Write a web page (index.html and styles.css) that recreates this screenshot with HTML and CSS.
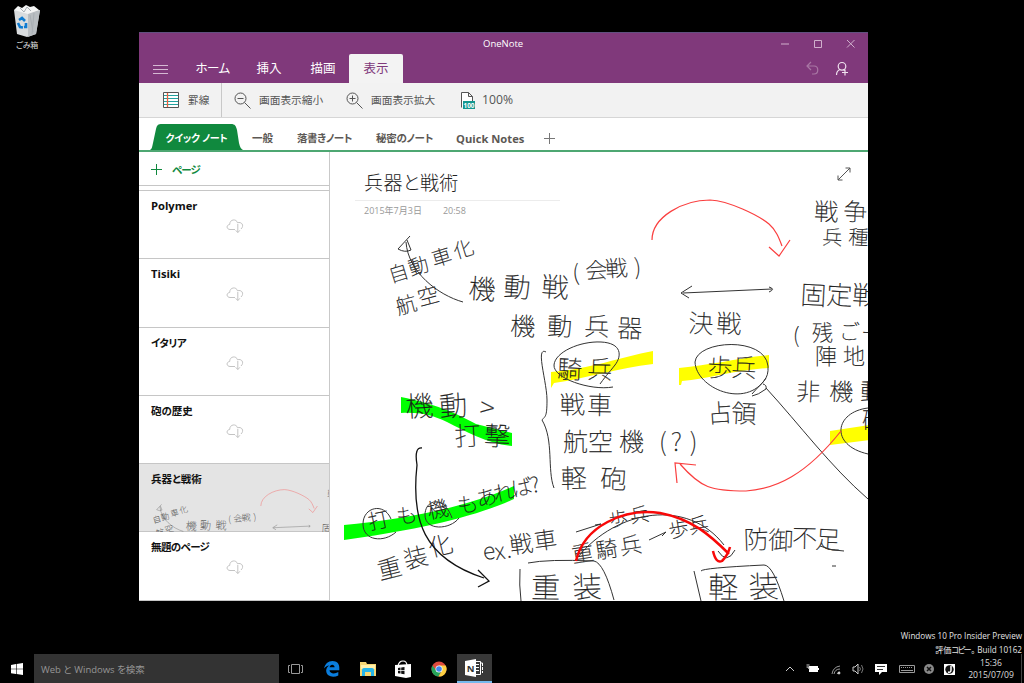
FILE: index.html
```html
<!DOCTYPE html>
<html lang="ja">
<head>
<meta charset="utf-8">
<title>OneNote</title>
<link rel="stylesheet" href="styles.css">
</head>
<body>
<svg class="defs" width="0" height="0">
  <symbol id="cloud" viewBox="0 0 18 15"><path d="M9 10.500H4C.2 10.300.2 5.800 3.700 5.500 3.600 0 10.500-.5 11.500 3.800 15.500 2.300 18.700 6.500 15 10M11.800 5v8.300M9.700 11.300l2.100 2.300 2.100-2.300"/></symbol>
</svg>
<main class="desktop">
  <div class="bin">
    <svg width="28" height="32" viewBox="0 0 28 32"><path fill="#d9dcde" d="M1 5 27 5 23 29 14 32 4 29Z"/><path fill="#b9bec2" d="m15 8 12-3-4 24-8 3Z"/><path fill="#f4f5f5" d="m1 5 4-4 4 2 4-3 4 2 4-1 5 4-11 4Z"/><path stroke="#a9afb4" fill="none" d="m7 3 4 4 3-5 4 4M17 10l3 17M21 8l-2 21"/><path fill="none" stroke="#0e7bd1" stroke-width="2.600" d="m6 15 3-2 3 3M5 18l2 4 3 .5M13 18v4h-2"/></svg>
    <span>ごみ箱</span>
  </div>

  <section class="window">
    <header class="top">
      <div class="titlebar"><span class="title">OneNote</span>
        <svg class="controls" width="84" height="12" viewBox="0 0 84 12"><path d="M3 6h8M36.500 2.500h7v7h-7zM69 2l7.500 7.500M76.500 2 69 9.500"/></svg>
      </div>
      <nav class="menu">
        <svg class="burger" width="15" height="10"><path d="M0 1.500h15M0 5.500h15M0 9.500h15"/></svg>
        <span class="m home">ホーム</span><span class="m">挿入</span><span class="m">描画</span><span class="m active">表示</span>
        <svg class="account" width="42" height="16" viewBox="0 0 42 16"><path class="dim" d="M5 1 1 5l4 4M1 5h7c5 0 5 8 0 8H6"/><circle cx="36" cy="5.300" r="3.800"/><path d="M30.500 14c0-3 1-4.500 3.500-5.500M39 8.500v6M36 11.500h6M37.500 8.500l1 1"/></svg>
      </nav>
    </header>
    <div class="ribbon">
      <div class="tool rule"><svg width="17" height="17"><path fill="#fff" stroke="#555" d="M.5.5h15v15H.5z"/><path stroke="#23a2a0" d="M1 3.500h14M1 6.500h14M1 9.500h14M1 12.500h14"/><path stroke="#e8603c" stroke-width="1.300" d="M4.500 1v14"/></svg><span>罫線</span></div>
      <div class="tool out"><svg class="mag" width="17" height="17"><circle cx="6.500" cy="6.500" r="5.500"/><path d="m10.500 10.500 6 6M3.500 6.500h6"/></svg><span>画面表示縮小</span></div>
      <div class="tool in"><svg class="mag" width="17" height="17"><circle cx="6.500" cy="6.500" r="5.500"/><path d="m10.500 10.500 6 6M3.500 6.500h6M6.500 3.500v6"/></svg><span>画面表示拡大</span></div>
      <div class="tool pct"><svg width="15" height="17"><path fill="#fff" stroke="#555" d="M1.500 15.500V.5h7l4 4v5M8.500.5v4h4"/><path fill="#14978f" d="M3 9h12v8H3z"/><text x="9" y="15.800" font-size="7" font-weight="700" fill="#fff" text-anchor="middle" textLength="11" lengthAdjust="spacingAndGlyphs">100</text></svg><span>100%</span></div>
    </div>
    <nav class="sections">
      <div class="sec current"><svg width="93" height="26" viewBox="0 0 93 26"><path fill="#10893e" d="M0 26c2-1 2-3 3-7L6 5c1-4 2-5 6-5h69c4 0 5 2 6 6l2 13c1 4 2 6 4 7Z"/></svg><span>クイック ノート</span></div>
      <span class="sec s1">一般</span><span class="sec s2">落書きノート</span><span class="sec s3">秘密のノート</span><span class="sec s4">Quick Notes</span>
      <svg class="plus" width="11" height="11"><path d="M5.500 0v11M0 5.500h11"/></svg>
    </nav>
    <div class="body">
      <aside class="pages">
        <div class="add"><svg width="11" height="11"><path d="M5.500 0v11M0 5.500h11"/></svg><span>ページ</span></div>
        <div class="list">
          <div class="page"><b class="latin">Polymer</b><svg class="cloud"><use href="#cloud"/></svg></div>
          <div class="page"><b class="latin">Tisiki</b><svg class="cloud"><use href="#cloud"/></svg></div>
          <div class="page"><b class="kana">イタリア</b><svg class="cloud"><use href="#cloud"/></svg></div>
          <div class="page"><b>砲の歴史</b><svg class="cloud"><use href="#cloud"/></svg></div>
          <div class="page selected"><b>兵器と戦術</b><svg class="thumb" viewBox="139 463 190 68"><g transform="translate(-6.500 406.600) scale(.41)"><use href="#ink"/></g></svg></div>
          <div class="page"><b class="kana">無題のページ</b><svg class="cloud"><use href="#cloud"/></svg></div>
        </div>
      </aside>
      <article class="note">
        <svg class="canvas" width="538" height="449" viewBox="330 152 538 449">
          <g id="ink">
            <g class="lime"><path d="M401 397C435 404 454 412 476 424L512 433V446C488 444 465 431 447 422C432 415 420 412 401 413Z"/><path d="M344 525C400 520 466 508 514 486V499C473 518 410 531 344 540Z"/></g>
            <g class="yellow"><path d="M551 372C591 369 620 357 653 351V364C618 368 588 378 554 383L551 388Z"/><path d="M679 368C711 365 740 358 769 355V368C736 370 708 379 682 381L681 385H679Z"/><path d="M830 431 870 425V440L830 445Z"/></g>
            <g class="hand">
              <text font-size="20" x="391 411 434 456" y="283 276 267 259" rotate="-17">自動車化</text>
              <text font-size="21" x="398 420" y="315 306" rotate="-15">航空</text>
              <text font-size="27" x="468 503 541" y="298 296 296" rotate="4">機動戦</text>
              <text font-size="22" x="573 586 606 635" y="281 279 277 275" rotate="-4">(会戦)</text>
              <text font-size="25" x="510 547 584 617" y="335 335 335 337" rotate="2">機動兵器</text>
              <text font-size="25" x="688 716" y="332" rotate="3">決戦</text>
              <text font-size="25" x="557 587" y="378" rotate="2">騎兵</text>
              <text font-size="25" x="707 731" y="376" rotate="3">歩兵</text>
              <text font-size="25" x="560 587" y="414" rotate="-1 1">戦車</text>
              <text font-size="25" x="708 731" y="423 422" rotate="-4 3">占領</text>
              <text font-size="25" x="563 588 619 659 671 690" y="451">航空機(?)</text>
              <text font-size="26" x="561 600" y="488" rotate="-1 2">軽砲</text>
              <text font-size="28" x="406 440 479" y="417 417 417" rotate="-3 -4 6">機動&gt;</text>
              <text font-size="26" x="455 484" y="446 445" rotate="-3 2">打撃</text>
              <text font-size="21" x="370 398 429 459 478 495 513 532" y="530 525 519 514 507 502 497 493" rotate="-12">打も機もあれば?</text>
              <text font-size="24" x="380 406 431" y="580 569 557" rotate="-14">重装化</text>
              <text font-size="23" x="484 496 507 511 535" y="560 560 558 554 550" rotate="-8">ex.戦車</text>
              <text font-size="19" x="610 631" y="527 523" rotate="-8">歩兵</text>
              <text font-size="22" x="573 597 621" y="563 559 555" rotate="-9">重騎兵</text>
              <text font-size="20" x="670 690" y="538 534" rotate="-10">歩兵</text>
              <text font-size="25" x="744 768 792 815" y="549 549 547 548" rotate="-2 2 1 3">防御不足</text>
              <text font-size="29" x="531 573" y="598" rotate="1 -2">重装</text>
              <text font-size="30" x="708 749" y="598" rotate="1 -2">軽装</text>
              <text font-size="24" x="814 843" y="220" rotate="2">戦争</text>
              <text font-size="20" x="822 848" y="244" rotate="3">兵種</text>
              <text font-size="26" x="800 826 852" y="304" rotate="3">固定戦</text>
              <text font-size="21" x="793 812 839 861" y="343 340 339 340">(残ごー</text>
              <text font-size="22" x="815 843" y="364">陣地</text>
              <text font-size="24" x="796 829 860" y="400" rotate="2">非機動</text>
              <text font-size="24" x="862" y="429">砲</text>
            </g>
            <g class="line">
              <path d="M410 236 398 249Q405 253 411 250L407 240M406 242C408 272 438 295 463 302"/><path d="M683 293 772 289M692 286 681 293 689 298M769 287q7 2 0 5"/>
              <path d="M546 352C535 346 547 382 547 400S545 416 542 420C554 440 547 470 554 488"/>
              <path d="M613 387C590 391 553 378 554 365S580 341 601 342 622 356 615 365 608 373 600 384"/>
              <path d="M766 378C746 410 696 388 695 362 697 340 765 336 768 366 769 380 762 382 752 394"/>
              <path d="M763 384q4 1 3 5-8 6-14 7M766 388C800 425 830 466 868 499"/>
              <path d="M868 408C835 412 829 445 868 454"/>
              <path class="bold" d="M422 448Q414 447 417 465C411 520 423 558 484 578M478 570 489 581 478 587"/>
              <path d="M391 519C384 502 363 507 363 524S384 543 396 532"/><path d="M452 518C444 495 425 499 425 515S450 530 459 518"/>
              <path d="M576 532 601 524 595 525M649 540 666 532 662 536"/>
              <path d="M520 569Q519 585 521 601M528 563Q548 559 594 561 604 563 614 600M694 571 701 601M701 571Q702 568 764 565 773 565 784 601M578 557C617 509 688 498 724 545M718 551q9 14 17-1M820 546Q832 551 844 551M832 566h4"/>
            </g>
            <g class="red"><path d="M652 240C652 217 683 200 710 200C729 201 758 215 769 224C776 230 779 238 782 246M769 247 779 256 790 240"/><path d="M841 431C806 475 776 489 746 491C711 491 701 488 680 464M677 483 675 463 696 465"/></g>
            <path class="redbold" d="M576 561C584 526 624 508 660 513 692 519 710 535 729 554M713 551q3 13 9 10 6-6 8-14"/>
          </g>
        </svg>
        <div class="heading"><h1>兵器と戦術</h1><p><span>2015年7月3日</span><span>20:58</span></p></div>
        <svg class="expand" width="14" height="14"><path d="m1 13 12-12M8.500 1H13v4.500M1 8.500V13h4.500"/></svg>
      </article>
    </div>
  </section>

  <div class="watermark"><div>Windows 10 Pro Insider Preview</div><div class="build">評価<span class="half">コピー</span>。 Build 10162</div></div>

  <footer class="taskbar">
    <svg class="start" width="12" height="12"><path fill="#fff" d="M0 2 5 1v4.700H0zM5.600.9 12 0v5.700H5.600zM0 6.300h5V11L0 10.200zM5.600 6.300H12V12l-6.400-.9z"/></svg>
    <div class="search">Web と Windows を検索</div>
    <svg class="task" width="16" height="12"><path fill="none" stroke="#999" d="M3.500 1.500h8v9h-8zM2 2.500H.5v7H2M13 2.500h1.500v7H13"/></svg>
    <div class="app"><svg width="16" height="16" viewBox="0 0 16 16"><path fill="#0a7ddd" d="M0 7.500C1 3 4 0 8.500 0 13 0 15.500 3 15.300 7v2.300H5.500c.3 3.500 5.200 4 8.800 1.800v3.300C9 17.200 2.500 15.300 2.200 10 2 7.500 3.500 5.500 5.500 4.500 3 4.700 1 6 0 7.500Zm5.600-1.300h5c0-3.400-4.600-3.300-5 0Z"/></svg></div>
    <div class="app"><svg width="16" height="14" viewBox="0 0 16 14"><path fill="#f6d673" d="M0 0h6l1 2h9v12H0z"/><path fill="#fff0ab" d="M1 3h14v4H1z"/><path fill="#25b5e9" d="M2 14V8q0-2 2-2h8q2 0 2 2v6h-3v-4H5v4z"/></svg></div>
    <div class="app"><svg width="16" height="18" viewBox="0 0 16 18"><path fill="none" stroke="#fff" stroke-width="1.200" d="M3 6q1-5 5-5t4 5"/><path fill="#fff" d="m0 5 16-1v13l-5 1L0 16z"/><path fill="#111" d="m3 8 2.500-.4v2.600H3zm3.200-.5L9.500 7v3.200H6.200zM3 11h2.500v2.600L3 13.200zm3.200 0h3.300v3.200l-3.300-.5z"/></svg></div>
    <div class="app"><svg width="16" height="16" viewBox="0 0 16 16"><circle cx="8" cy="8" r="7.500" fill="#dd4b3e"/><path fill="#26a35a" d="M1.300 4.500A7.500 7.500 0 0 0 7.500 15.500L10.500 10 5 9Z"/><path fill="#fdd043" d="M8 4.500h6.700A7.500 7.500 0 0 1 7.500 15.500l3.500-6Z"/><circle cx="8" cy="8" r="3.500" fill="#fff"/><circle cx="8" cy="8" r="2.800" fill="#4286ed"/></svg></div>
    <div class="app open"><svg width="18" height="18" viewBox="0 0 18 18"><path fill="#fff" d="m0 2 11-2v18L0 16z"/><path fill="none" stroke="#fff" d="M11 2.500h4.500v13H11M11 5.500h3M11 8.500h3M11 11.500h3M16 4h1.500v3M17.500 8v3M17.500 12v2"/><text x="5.500" y="12.500" text-anchor="middle" font-size="9.500" font-weight="700" fill="#333">N</text></svg></div>
    <div class="tray">
      <svg width="174" height="16" viewBox="0 0 174 16" fill="none" stroke="#ccc"><path d="m1 10 4-4 4 4"/><path fill="#fff" stroke="none" d="M24 5h9v6h-9zM33 7h1v2h-1z"/><path d="M21.500 4h3M21.500 6h3M23 6q0 2 2 2"/><path d="M47 13q1-7 8-8M49 13q1-5 6-5M52 13q1-2 3-2" stroke="#999"/><circle cx="54" cy="12" r="1" fill="#fff"/><path d="M68 6h2l3-3v10l-3-3h-2z"/><path stroke="#777" d="M74.500 6q2 2 0 4M76.500 4q3 4 0 8"/><path fill="#fff" stroke="none" d="M90 3h12v8h-5l-3 3v-3h-4z"/><path stroke="#333" d="M92 5.500h8M92 8.500h6"/><path stroke="#999" d="M114.500 4.500h15v7h-15zM116 9.500h12"/><path stroke="#999" stroke-dasharray="1 1" d="M116 6.500h12"/><circle cx="144" cy="8" r="5" fill="#888" stroke="none"/><path stroke="#111" stroke-width="1.500" d="m142 6 4 4M146 6l-4 4"/><path fill="#fff" stroke="none" d="M159 3h11v11h-11z"/><circle cx="164.500" cy="8.500" r="4.200" fill="#111" stroke="none"/><path stroke="#fff" stroke-width="1.500" d="M166 5v4q0 3-3 2"/></svg>
    </div>
    <div class="clock"><div>15:36</div><div>2015/07/09</div></div>
  </footer>
</main>
</body>
</html>
```
FILE: styles.css
```css
* { box-sizing: border-box; }
body { margin: 0; background: #000; font-family: "Open Sans", "Noto Sans CJK JP", sans-serif; font-feature-settings: "palt"; overflow: hidden; }
svg { display: block; flex: none; }
.defs { position: absolute; }
.desktop { position: relative; width: 1024px; height: 683px; overflow: hidden; white-space: nowrap; }
.bin { position: absolute; left: 0; top: 5px; width: 54px; display: flex; flex-direction: column; align-items: center; color: #ddd; font-size: 8px; line-height: 14px; }
.bin span { letter-spacing: -.2px; margin-top: 1px; }

.window { position: absolute; left: 139px; top: 32px; width: 729px; height: 569px; background: #fff; border-top: 1px solid #625080; display: flex; flex-direction: column; overflow: hidden; }
.top { background: #80397b; height: 50px; flex: none; color: #fff; }
.titlebar { height: 21px; display: flex; align-items: center; padding-left: 344px; }
.title { font-size: 9.500px; width: 42px; }
.controls { margin-left: 253px; fill: none; stroke: #d0b0cd; }
.menu { height: 29px; display: flex; align-items: center; padding-left: 14px; }
.burger { stroke: #d5b9d3; margin-right: 14px; }
.m { width: 54px; height: 29px; line-height: 29px; text-align: center; font-size: 12.500px; }
.m.home { width: 60px; padding-left: 1px; letter-spacing: -.6px; }
.m.active { margin-left: -1px; background: #f3f3f3; color: #80397b; border-radius: 2px 2px 0 0; }
.account { margin-left: 403px; fill: none; stroke: #f0e3ef; stroke-width: 1.200; overflow: visible; }
.account .dim { stroke: #a877a4; }

.ribbon { height: 35px; flex: none; background: #f2f2f2; border-bottom: 1px solid #d6d6d6; display: flex; }
.tool { display: flex; align-items: center; font-size: 10.700px; color: #555; }
.tool span { margin-top: -1px; }
.rule { width: 83px; padding-left: 24px; gap: 8px; border-right: 1px solid #c8c8c8; }
.out { width: 112px; padding-left: 12px; gap: 8px; }
.in { width: 115px; padding-left: 12px; gap: 8px; }
.pct { padding-left: 11px; gap: 7px; font-size: 12.200px; }
.mag { fill: none; stroke: #555; }

.sections { height: 34px; flex: none; display: flex; align-items: flex-end; border-bottom: 2px solid #4ea772; }
.sec { font-size: 10.500px; font-weight: 700; line-height: 29px; height: 26px; color: #5c5854; }
.current { width: 93px; margin-left: 11px; color: #fff; display: grid; }
.current svg, .current span { grid-area: 1 / 1; }
.current span { text-align: center; z-index: 1; font-size: 10px; letter-spacing: -.300px; }
.s1 { width: 45px; margin-left: 9px; }
.s2 { width: 79px; letter-spacing: -.400px; }
.s3 { width: 80px; letter-spacing: -.300px; }
.s4 { width: 88px; font-size: 11.200px; }
.plus { stroke: #777; margin-bottom: 6px; }

.body { flex: 1; display: flex; min-height: 0; }
.pages { width: 191px; flex: none; border-right: 1px solid #c9c9c9; overflow: hidden; }
.add { height: 34px; border-bottom: 1px solid #c6c6c6; display: flex; align-items: center; gap: 10px; padding: 1px 0 0 12px; color: #10893e; font-size: 10.500px; font-weight: 700; }
.add span { letter-spacing: -.900px; }
.add svg { stroke: #10893e; }
.list { margin-top: 4px; border-top: 1px solid #c6c6c6; }
.page { height: 68.250px; border-bottom: 1px solid #c6c6c6; padding: 7px 0 0 12px; position: relative; display: flex; flex-direction: column; }
.page b { display: block; font-size: 10.500px; line-height: 17px; color: #111; }
.page .latin { font-size: 11.200px; line-height: 15px; margin-bottom: 2px; }
.page .kana { letter-spacing: -.600px; }
.cloud { width: 18px; height: 15px; margin: 4px 0 0 75px; fill: none; stroke: #c3c3c3; }
.selected { background: #e4e4e4; }
.thumb { position: absolute; left: 0; top: 0; width: 190px; height: 68px; opacity: .7; }

.note { position: relative; flex: 1; overflow: hidden; }
.canvas { position: absolute; left: 0; top: 0; }
.heading { position: relative; margin-left: 25px; width: 205px; }
.heading h1 { margin: 0; height: 49px; padding: 14px 0 0 9px; border-bottom: 1px solid #ececec; font-size: 19px; line-height: 34px; font-weight: 300; color: #222; letter-spacing: .400px; }
.heading p { margin: 0; padding-left: 9px; display: flex; gap: 21px; font-size: 9px; line-height: 19px; color: #999; }
.expand { position: absolute; right: 17px; top: 15px; fill: none; stroke: #555; }
.hand { font-family: "Noto Sans CJK JP", sans-serif; font-weight: 100; fill: #1a1a1a; stroke: #1a1a1a; stroke-width: .250px; font-feature-settings: normal; }
.line { fill: none; stroke: #333; stroke-width: 1; }
.bold { stroke: #111; stroke-width: 1.300; }
.lime { fill: #0f0; }
.yellow { fill: #ff0; }
.red { fill: none; stroke: #fa3f3f; stroke-width: 1.200; }
.redbold { fill: none; stroke: #f80808; stroke-width: 2.500; }

.watermark { position: absolute; right: 2px; top: 629px; color: #e4e4e4; font-size: 8.150px; line-height: 14px; text-align: right; }
.half { letter-spacing: -1.500px; margin-right: 1px; }
.taskbar { position: absolute; left: 0; bottom: 0; width: 1024px; height: 29px; display: flex; align-items: center; }
.start { margin: 0 11px; }
.search { width: 245px; height: 29px; line-height: 31px; padding-left: 7px; background: #333; color: #969696; font-size: 9.500px; }
.task { margin: 0 11px 0 9px; }
.app { width: 34.500px; margin-right: 1px; height: 29px; display: flex; align-items: center; justify-content: center; }
.open { background: #383838; border-bottom: 2px solid #76b9ed; }
.tray { margin-left: 292px; }
.clock { width: 60px; margin-left: 3px; height: 29px; text-align: center; font-size: 8.600px; line-height: 12px; color: #ddd; padding-top: 3px; border-right: 1px solid #444; }
```
